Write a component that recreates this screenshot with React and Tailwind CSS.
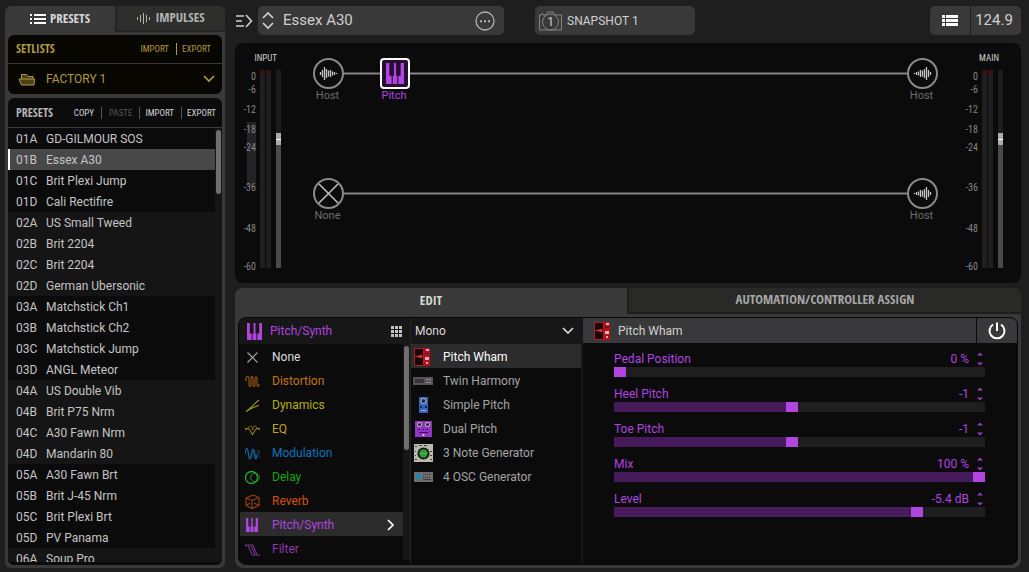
import React, { useState } from 'react';

const bankNames = [
  'GD-GILMOUR SOS', 'Essex A30', 'Brit Plexi Jump', 'Cali Rectifire',
  'US Small Tweed', 'Brit 2204', 'Brit 2204', 'German Ubersonic',
  'Matchstick Ch1', 'Matchstick Ch2', 'Matchstick Jump', 'ANGL Meteor',
  'US Double Vib', 'Brit P75 Nrm', 'A30 Fawn Nrm', 'Mandarin 80',
  'A30 Fawn Brt', 'Brit J-45 Nrm', 'Brit Plexi Brt', 'PV Panama',
  'Soup Pro',
];

// Four presets per bank: 01A, 01B, 01C, 01D, 02A...
const presets = bankNames.map((name, index) => ({
  slot: `0${Math.floor(index / 4) + 1}${'ABCD'[index % 4]}`,
  name,
  odd: Math.floor(index / 4) % 2 === 1,
}));

const initialParams = [
  { name: 'Pedal Position', min: 0, max: 100, step: 1, value: 0, unit: ' %' },
  { name: 'Heel Pitch', min: -24, max: 24, step: 1, value: -1, unit: '' },
  { name: 'Toe Pitch', min: -24, max: 24, step: 1, value: -1, unit: '' },
  { name: 'Mix', min: 0, max: 100, step: 1, value: 100, unit: ' %' },
  { name: 'Level', min: -60, max: 6, step: 0.1, value: -5.4, unit: ' dB' },
];

const scaleMarks = [
  { label: '0', gap: 'mt-0' },
  { label: '-6', gap: '-mt-px' },
  { label: '-12', gap: 'mt-1.5' },
  { label: '-18', gap: 'mt-1.5' },
  { label: '-24', gap: 'mt-1' },
  { label: '-36', gap: 'mt-[26px]' },
  { label: '-48', gap: 'mt-[27px]' },
  { label: '-60', gap: 'mt-6' },
];

const Chevron = ({ d = 'M1 1l5 5 5-5', className }) => (
  <svg className={className} width="12" height="8" viewBox="0 0 12 8" fill="none" stroke="currentColor" strokeWidth="1.7">
    <path d={d} />
  </svg>
);

const KeysIcon = ({ className }) => (
  <svg className={className} viewBox="0 0 16 18" preserveAspectRatio="none" fill="currentColor">
    <path d="M0 0h3v11h2v7H0zM6 11h1V0h2v11h1v7H6zM13 0h3v18h-5v-7h2z" />
  </svg>
);

const WaveIcon = ({ flip }) => (
  <svg className={flip ? '-scale-x-100' : ''} width="19" height="15" viewBox="0 0 19 15" stroke="#c4c4c4" strokeWidth="1.3">
    <path d="M1.5 6v3M3.5 4v7M5.5 1v13M7.5 3v9M9.5 4.5v6M11.5 4v7M13.5 5.5v4M15.5 6v3M17.5 7v1" />
  </svg>
);

const ListIcon = () => (
  <svg width="16" height="11" viewBox="0 0 16 11" fill="#fff">
    <path d="M0 0h2v2H0zM4 0h12v2H4zM0 4h2v2H0zM4 4h12v2H4zM0 8h2v2H0zM4 8h12v2H4z" />
  </svg>
);

const categoryIcons = {
  None: <path d="M2.500 2.500l10 10M12.500 2.500l-10 10" />,
  Distortion: <path d="M1 7V4q0-1.500 1.500-1.500T4 4v7q0 1.500 1 1.500T6 11V4q0-1.500 1-1.500T8 4v7q0 1.500 1 1.500T10 11V4q0-1 1-1T12 4v7q0 1.500 1 1.500T14 10" />,
  Dynamics: <path d="M1 13.500C5 11 9 8.500 14 7.500M1 13.500C6 10 9 6 14 2" />,
  EQ: (
    <>
      <path d="M0 6.500h3.500l1.500 2 2.500 4 2.500-4 1.500-2H15" />
      <path d="M0 8c3 0 3-4 5.500-4S9 8 7.500 8 8 4 10 4s2 4 5 4" strokeWidth=".8" />
    </>
  ),
  Modulation: (
    <>
      <path d="M0 8C1.500 0 2.500 1 3.500 8s2 6 3 0 2-7 3 0 1.500 6 2.500 1" strokeWidth="1.400" />
      <path d="M7 12c1-3 1-7 2-8s1.500 8 2.500 8 1-8 2-8 .5 6 1 8" strokeWidth=".6" />
    </>
  ),
  Delay: (
    <>
      <circle cx="6.500" cy="7.500" r="6" strokeWidth="1.300" />
      <circle cx="10" cy="7.500" r="4.300" strokeWidth=".9" />
    </>
  ),
  Reverb: <path d="M1 4L8 1l6 2.500v8L7 14.500l-6-3zM1 4l6 2.500 7-3M7 6.500v8M1 11.500L5 9M14 11.500L9 9" />,
  Filter: <path d="M0 3h8l4 10h3M3 3l4 10h6M6 3l4 10M0 3l1.500 1.500" />,
};

const categories = [
  { name: 'None', color: 'text-[#dedede]', icon: 'text-[#a8a8a8]' },
  { name: 'Distortion', color: 'text-[#c27414]', icon: 'text-[#9a5c10]' },
  { name: 'Dynamics', color: 'text-[#b5ae12]', icon: 'text-[#99941c]' },
  { name: 'EQ', color: 'text-[#c2a41c]', icon: 'text-[#94801c]' },
  { name: 'Modulation', color: 'text-[#0f74b8]', icon: 'text-[#14608f]' },
  { name: 'Delay', color: 'text-[#10a810]', icon: 'text-[#2ba42b]' },
  { name: 'Reverb', color: 'text-[#d8500f]', icon: 'text-[#9a400f]' },
  { name: 'Pitch/Synth', color: 'text-[#b045e0]', icon: 'text-[#b348e6]' },
  { name: 'Filter', color: 'text-[#8f3aae]', icon: 'text-[#713287]' },
];

const modelIcons = {
  'Pitch Wham': (
    <>
      <path d="M1.500 1.500h9v17h-9zM1.500 9.500h9" fill="#180707" stroke="#b01a22" />
      <path d="M3 9.500l6-2v4z" fill="#d8303a" />
      <path d="M11 1h6v18h-6z" fill="#b5101a" />
      <path d="M13 2h3v2h-3zM12 10h4v3h-4z" fill="#d8b8b8" />
      <path d="M12 6h4v1h-4z" fill="#5c0a10" />
      <circle cx="14" cy="16" r="1" fill="#ddd" />
    </>
  ),
  'Twin Harmony': (
    <>
      <path d="M0 6h20v8H0z" fill="#57535a" />
      <path d="M2 8h9v4H2z" fill="#37343a" />
      <path d="M13 8h2v1h-2zM16 8h2v1h-2zM13 11h2v1h-2zM16 11h2v1h-2z" fill="#99969c" />
    </>
  ),
  'Simple Pitch': (
    <>
      <path d="M6 2h9v16H6z" fill="#3564b8" />
      <circle cx="10.500" cy="6" r="3" fill="#aab4c4" />
      <circle cx="10.500" cy="6" r="2" fill="#20293c" />
      <path d="M7 11h2v2H7zM12 11h2v2h-2z" fill="#15244c" />
      <path d="M8 15h5v1H8z" fill="#8eb1f0" />
    </>
  ),
  'Dual Pitch': (
    <>
      <path d="M2 2h17v16H2z" fill="#9434c4" />
      <circle cx="6.500" cy="5.500" r="2.500" fill="#bbb" />
      <circle cx="14.500" cy="5.500" r="2.500" fill="#bbb" />
      <circle cx="6.500" cy="5.500" r="1.500" fill="#222" />
      <circle cx="14.500" cy="5.500" r="1.500" fill="#222" />
      <path d="M5 10h2v1H5zM9 10h2v1H9zM13 10h2v1h-2zM6 13h9v1H6z" fill="#3a1150" />
      <circle cx="10.500" cy="16" r="1" fill="#ddd" />
    </>
  ),
  '3 Note Generator': (
    <>
      <path d="M1 1h19v18H1z" fill="#b9b9ad" />
      <path d="M2 3h2v1H2zM6 2h3v1H6zM11 2h3v1h-3zM2 8h1v1H2zM2 12h1v1H2zM2 16h2v1H2zM17 8h2v1h-2zM17 12h2v1h-2zM17 16h2v1h-2z" fill="#444" />
      <circle cx="10.500" cy="10.500" r="6" fill="#141814" />
      <circle cx="10.500" cy="10.500" r="4.200" fill="#2f9a38" />
      <path d="M7 10.500h7" stroke="#54bc5c" />
    </>
  ),
  '4 OSC Generator': (
    <>
      <path d="M1 5h19v10H1z" fill="#6d6d6f" />
      <path d="M3 7h5v5H3z" fill="#1a8ab4" />
      <path d="M10 7h1v1h-1zM12 7h1v1h-1zM14 7h1v1h-1zM16 7h1v1h-1zM10 10h1v1h-1zM12 10h1v1h-1zM14 10h1v1h-1zM16 10h1v1h-1zM10 12h8v1h-8z" fill="#3a3a3c" />
    </>
  ),
};

const ModelIcon = ({ name }) => (
  <svg className="shrink-0" width="21" height="20" viewBox="0 0 21 20">{modelIcons[name]}</svg>
);

const PresetBrowser = () => {
  const [selected, setSelected] = useState(1);

  return (
    <aside className="flex w-[220px] shrink-0 flex-col rounded-md bg-[#393939]">
      <div className="flex h-[26px] font-['Open_Sans_Condensed','Liberation_Sans_Narrow',Roboto,sans-serif] text-[13px] font-bold">
        <button className="flex w-[110px] items-center justify-center gap-1 text-[#d8d8d8]">
          <ListIcon />
          PRESETS
        </button>
        <button className="flex flex-1 items-center justify-center gap-1 rounded-tr-md border-b-2 border-l-2 border-[#242424] bg-[#2e2e2d] text-[#b4b4b4]">
          <svg width="14" height="11" viewBox="0 0 14 11" stroke="currentColor">
            <path d="M.5 4v3M3.500 2v7M6.500 0v11M9.500 2v7M12.500 4v3" />
          </svg>
          IMPULSES
        </button>
      </div>
      <div className="flex min-h-0 flex-1 flex-col gap-1 px-[3px] pt-[3px] pb-[3px]">
        <section className="rounded-md bg-[#070601] text-[#b09a3c]">
          <div className="flex h-[29px] items-center border-b border-[#393939] px-2">
            <h2 className="flex-1 font-['Open_Sans_Condensed','Liberation_Sans_Narrow',Roboto,sans-serif] text-xs font-bold">SETLISTS</h2>
            <div className="flex divide-x divide-[#b09a3c] font-['Roboto_Condensed','Liberation_Sans_Narrow',Roboto,sans-serif] text-[9px] leading-3">
              <button className="px-[7px]">IMPORT</button>
              <button className="pr-[3px] pl-[5px]">EXPORT</button>
            </div>
          </div>
          <label className="flex h-[30px] items-center gap-2.5 pr-[7px] pl-2.5">
            <svg width="18" height="13" viewBox="0 0 18 13" fill="#4a401a" stroke="currentColor">
              <path d="M3.500 6V1.500h5l1.500 2h5V6" />
              <path d="M1 6h15.500l-.5 6H3.500z" />
            </svg>
            <select aria-label="Setlist" className="flex-1 appearance-none bg-transparent text-xs outline-none">
              <option>FACTORY 1</option>
            </select>
            <Chevron />
          </label>
        </section>
        <section className="flex min-h-0 flex-1 flex-col rounded-md bg-[#0b0b0b] pb-[3px]">
          <div className="flex h-[30px] shrink-0 items-center border-b border-[#393939] pl-2">
            <h2 className="flex-1 font-['Open_Sans_Condensed','Liberation_Sans_Narrow',Roboto,sans-serif] text-xs font-bold text-[#b4b4b4]">PRESETS</h2>
            <div className="flex divide-x divide-[#555] font-['Roboto_Condensed','Liberation_Sans_Narrow',Roboto,sans-serif] text-[9px] leading-3 text-[#d4d4d4]">
              <button className="px-[7px]">COPY</button>
              <button className="px-[7px] text-[#555]">PASTE</button>
              <button className="pr-[7px] pl-[5px]">IMPORT</button>
              <button className="pr-1.5 pl-[5px]">EXPORT</button>
            </div>
          </div>
          <div className="flex min-h-0 flex-1">
            <div className="flex-1 overflow-hidden">
              {presets.map((preset, index) => (
                <button
                  key={preset.slot}
                  onClick={() => setSelected(index)}
                  className={`flex h-[21px] w-full items-center text-left text-xs text-[#c4c4c4] ${
                    index === selected ? 'border-l-2 border-white bg-[#484848] pl-1.5' : preset.odd ? 'bg-[#151515] pl-2' : 'bg-[#0b0b0b] pl-2'
                  }`}
                >
                  <span className="w-[30px]">{preset.slot}</span>
                  <span>{preset.name}</span>
                </button>
              ))}
            </div>
            <div className="w-[7px] bg-[#151515] px-px pt-0.5">
              <div className="h-16 rounded-full bg-[#6e6e6e]" />
            </div>
          </div>
        </section>
      </div>
    </aside>
  );
};

const TopBar = () => (
  <header className="flex h-[29px] items-center text-[#d0d0d0]">
    <button aria-label="Toggle browser" className="w-[23px]">
      <svg width="19" height="14" viewBox="0 0 19 14" fill="none" stroke="currentColor" strokeWidth="1.600">
        <path d="M1 2h8M1 7h6M1 12h8M11 1l5.500 6L11 13" />
      </svg>
    </button>
    <div className="flex h-full w-[246px] items-center rounded-[5px] bg-[#393939] pr-[9px] pl-1">
      <div className="flex w-[21px] flex-col gap-[3px]">
        <button aria-label="Previous preset"><Chevron d="M1 7l5-5 5 5" /></button>
        <button aria-label="Next preset"><Chevron /></button>
      </div>
      <span className="flex-1 text-[15px]">Essex A30</span>
      <button aria-label="Preset menu">
        <svg width="20" height="20" viewBox="0 0 20 20" fill="none" stroke="#b4b4b4" strokeWidth="1.300">
          <circle cx="10" cy="10" r="9" />
          <path d="M5 9.200h2v2H5zM9 9.200h2v2H9zM13 9.200h2v2h-2z" fill="#b4b4b4" stroke="none" />
        </svg>
      </button>
    </div>
    <button className="ml-[31px] flex h-full w-40 items-center gap-[5px] rounded-[5px] bg-[#393939] pl-1">
      <span className="relative">
        <svg width="23" height="20" viewBox="0 0 23 20" fill="none" stroke="#858585">
          <path d="M.5 4H2V3h2v1h3l2-3h5l2 3h6.500v15H.5z" />
          <circle cx="11.500" cy="11" r="8" />
        </svg>
        <span className="absolute inset-0 flex items-center justify-center pt-0.5 text-xs">1</span>
      </span>
      <span className="text-xs">SNAPSHOT 1</span>
    </button>
    <div className="ml-auto flex h-full gap-px">
      <button aria-label="Setlist view" className="flex w-10 items-center justify-center rounded-l-[5px] bg-[#393939]">
        <svg width="16" height="12" viewBox="0 0 16 12" fill="#fff">
          <path d="M0 0h3v3H0zM4 0h12v3H4zM0 4h3v3H0zM4 4h12v3H4zM0 8h3v3H0zM4 8h12v3H4z" />
        </svg>
      </button>
      <button className="w-[50px] rounded-r-[5px] bg-[#393939] pr-1 text-[15px]">124.9</button>
    </div>
  </header>
);

const Meter = ({ label, highlight }) => {
  const [gain, setGain] = useState(66);

  return (
    <div className="flex flex-col gap-1">
      <div className="pr-1 text-right font-['Roboto_Condensed','Liberation_Sans_Narrow',Roboto,sans-serif] text-[9px] leading-4 text-[#d0d0d0]">{label}</div>
      <div className="flex h-[198px]">
        <div className="relative mr-1 w-[21px] text-right font-['Roboto_Condensed','Liberation_Sans_Narrow',Roboto,sans-serif] text-[10px] leading-[14px] text-[#858585]">
          {highlight && <div className="absolute top-[52px] right-0 h-[65px] w-[9px] bg-[#242426]" />}
          {scaleMarks.map((mark) => (
            <div key={mark.label} className={`relative ${mark.gap}`}>{mark.label}</div>
          ))}
        </div>
        <div className="mr-px w-[5px] border-t-5 border-[#351414] bg-[#1e1f1e]" />
        <div className="mr-[5px] w-[5px] border-t-5 border-[#351414] bg-[#1e1f1e]" />
        <input
          type="range"
          aria-label={`${label} level`}
          min="0"
          max="100"
          value={gain}
          onChange={(e) => setGain(Number(e.target.value))}
          style={{ background: `linear-gradient(to top, #4a4a4a ${gain}%, #1d1d1d ${gain}%)` }}
          className="h-full w-[5px] appearance-none [direction:rtl] [writing-mode:vertical-lr] [&::-webkit-slider-thumb]:h-3 [&::-webkit-slider-thumb]:w-[5px] [&::-webkit-slider-thumb]:appearance-none [&::-webkit-slider-thumb]:bg-[linear-gradient(#acacac_6px,#fff_6px,#fff_7px,#acacac_7px)]"
        />
      </div>
    </div>
  );
};

const Node = ({ label, children }) => (
  <div className="flex w-[31px] shrink-0 flex-col items-center">
    <button aria-label={label} className="flex size-[31px] items-center justify-center rounded-full border-2 border-[#8a8a8a]">
      {children}
    </button>
    <span className="pr-0.5 text-[11px] leading-[14px] text-[#6c6c6c]">{label}</span>
  </div>
);

const Wire = ({ className }) => <div className={`mt-3.5 h-[3px] border-y border-[#444] bg-[#8a8a8a] ${className}`} />;

const SignalChain = () => (
  <section className="flex rounded-lg bg-[#0b0b0b] pt-[7px] pr-[18px] pb-[15px]">
    <Meter label="INPUT" highlight />
    <div className="flex flex-1 flex-col gap-[75px] pt-2 pr-[19px] pl-8">
      <div className="flex items-start">
        <Node label="Host"><WaveIcon /></Node>
        <Wire className="w-9" />
        <div className="flex w-[30px] flex-col items-center">
          <button aria-label="Pitch" className="flex h-[31px] w-[30px] items-center justify-center rounded-[4px] border-2 border-white bg-[#241030]">
            <KeysIcon className="h-[21px] w-[18px] text-[#b045e0]" />
          </button>
          <span className="pr-0.5 text-[11px] leading-[14px] text-[#b045e0]">Pitch</span>
        </div>
        <Wire className="flex-1" />
        <Node label="Host"><WaveIcon flip /></Node>
      </div>
      <div className="flex items-start">
        <Node label="None">
          <svg className="shrink-0" width="21" height="21" viewBox="0 0 21 21" stroke="#c4c4c4" strokeWidth="1.500">
            <path d="M1 1l19 19M20 1L1 20" />
          </svg>
        </Node>
        <Wire className="flex-1" />
        <Node label="Host"><WaveIcon flip /></Node>
      </div>
    </div>
    <Meter label="MAIN" />
  </section>
);

const CategoryList = () => {
  const [category, setCategory] = useState('Pitch/Synth');

  return (
    <div className="flex w-[172px] shrink-0 flex-col border-r border-[#242424]">
      <div className="flex h-[26px] shrink-0 items-center bg-[#171717] pr-2 pl-2 text-xs text-[#b045e0]">
        <KeysIcon className="h-[17px] w-[15px]" />
        <span className="ml-2 flex-1">Pitch/Synth</span>
        <button aria-label="Grid view">
          <svg width="11" height="11" viewBox="0 0 11 11" fill="#c4c4c4">
            <path d="M0 0h3v3H0zM4 0h3v3H4zM8 0h3v3H8zM0 4h3v3H0zM4 4h3v3H4zM8 4h3v3H8zM0 8h3v3H0zM4 8h3v3H4zM8 8h3v3H8z" />
          </svg>
        </button>
      </div>
      <div className="flex min-h-0 flex-1">
        <div className="flex-1 overflow-hidden pl-px">
          {categories.map(({ name, color, icon }) => (
            <button
              key={name}
              onClick={() => setCategory(name)}
              className={`flex h-6 w-full items-center pt-0.5 pr-2 pl-[5px] text-left text-xs ${color} ${name === category ? 'bg-[#2c2c2c]' : ''}`}
            >
              {name === 'Pitch/Synth' ? (
                <KeysIcon className="mr-[14px] ml-px h-[14px] w-3" />
              ) : (
                <svg className={`mr-3 ${icon}`} width="15" height="15" viewBox="0 0 15 15" fill="none" stroke="currentColor" strokeWidth="1.100">
                  {categoryIcons[name]}
                </svg>
              )}
              <span className="flex-1">{name}</span>
              {name === category && (
                <svg width="8" height="12" viewBox="0 0 8 12" fill="none" stroke="#fff" strokeWidth="1.700">
                  <path d="M1 1l5 5-5 5" />
                </svg>
              )}
            </button>
          ))}
        </div>
        <div className="mb-1 w-[7px] bg-[#171717] px-px pt-0.5">
          <div className="h-[104px] rounded-full bg-[#6e6e6e]" />
        </div>
      </div>
    </div>
  );
};

const ModelList = ({ model, setModel }) => (
  <div className="flex w-[172px] shrink-0 flex-col border-r-2 border-[#171717]">
    <label className="flex h-[26px] items-center bg-[#171717] pr-[7px] pl-1 text-[#d8d8d8]">
      <select aria-label="Channel mode" className="flex-1 appearance-none bg-transparent text-xs outline-none">
        <option>Mono</option>
        <option>Stereo</option>
      </select>
      <Chevron />
    </label>
    {Object.keys(modelIcons).map((name) => (
      <button
        key={name}
        onClick={() => setModel(name)}
        className={`flex h-6 items-center gap-[9px] pt-0.5 pl-0.5 text-left text-xs ${name === model ? 'bg-[#2c2c2c] text-white' : 'text-[#a4a4a4]'}`}
      >
        <ModelIcon name={name} />
        {name}
      </button>
    ))}
  </div>
);

const ParamRow = ({ param, onChange }) => {
  const { name, min, max, step, value, unit } = param;
  const id = name.toLowerCase().replace(' ', '-');
  const fill = ((value - min) / (max - min)) * 100;

  return (
    <div className="flex flex-col text-xs text-[#b045e0]">
      <div className="flex h-[17px] items-center">
        <label htmlFor={id} className="flex-1">{name}</label>
        <span>{value}{unit}</span>
        <div className="flex w-4 flex-col items-end gap-1.5 pr-0.5">
          <button aria-label={`${name} up`} onClick={() => onChange(Math.min(max, value + step))}>
            <svg className="block" width="6" height="4" viewBox="0 0 6 4" fill="#9a3cc4"><path d="M0 3.500L3 .5l3 3z" /></svg>
          </button>
          <button aria-label={`${name} down`} onClick={() => onChange(Math.max(min, value - step))}>
            <svg className="block" width="6" height="4" viewBox="0 0 6 4" fill="#9a3cc4"><path d="M0 .5l3 3 3-3z" /></svg>
          </button>
        </div>
      </div>
      <input
        id={id}
        type="range"
        min={min}
        max={max}
        step={step}
        value={value}
        onChange={(e) => onChange(Number(e.target.value))}
        style={{ background: `linear-gradient(to right, #471a5c ${fill}%, #1e1e1e ${fill}%)` }}
        className="h-2.5 w-full appearance-none [&::-webkit-slider-thumb]:h-2.5 [&::-webkit-slider-thumb]:w-3 [&::-webkit-slider-thumb]:appearance-none [&::-webkit-slider-thumb]:bg-[#b045e0]"
      />
    </div>
  );
};

const Editor = () => {
  const [model, setModel] = useState('Pitch Wham');
  const [params, setParams] = useState(initialParams);

  const handleChange = (index, value) => {
    setParams(params.map((param, idx) => (idx === index ? { ...param, value } : param)));
  };

  return (
    <section className="flex min-h-0 flex-1 flex-col rounded-lg bg-[#393939]">
      <div className="flex h-[26px] shrink-0 font-['Open_Sans_Condensed','Liberation_Sans_Narrow',Roboto,sans-serif] text-[13px] font-bold">
        <button className="flex-1 text-[#d8d8d8]">EDIT</button>
        <button className="flex-1 rounded-tr-lg border-b-2 border-l-2 border-[#1e1e1c] bg-[#292927] text-[#a8a8a8]">AUTOMATION/CONTROLLER ASSIGN</button>
      </div>
      <div className="mx-[3px] mt-[3px] mb-[3px] flex min-h-0 flex-1 overflow-hidden rounded-lg border border-[#070707] bg-[#0b0b0b]">
        <CategoryList />
        <ModelList model={model} setModel={setModel} />
        <div className="flex min-w-0 flex-1 flex-col">
          <div className="flex h-[25px] gap-px text-[#d0d0d0]">
            <div className="flex flex-1 items-center gap-1 bg-[#39393b] pl-2.5 text-xs">
              <ModelIcon name={model} />
              {model}
            </div>
            <button aria-label="Bypass" className="flex w-10 items-center justify-center bg-[#39393b]">
              <svg width="18" height="18" viewBox="0 0 18 18" fill="none" stroke="#fff" strokeWidth="2">
                <path d="M9 .5V9M5 2.500a7.500 7.500 0 1 0 8 0" />
              </svg>
            </button>
          </div>
          <div className="flex flex-col gap-2 pt-[7px] pr-8 pl-[31px]">
            {params.map((param, index) => (
              <ParamRow key={param.name} param={param} onChange={(value) => handleChange(index, value)} />
            ))}
          </div>
        </div>
      </div>
    </section>
  );
};

const App = () => (
  <div className="flex h-screen gap-2.5 bg-[#1e1e1e] pt-1.5 pr-2 pb-1 pl-[5px] font-[Roboto,sans-serif]">
    <PresetBrowser />
    <main className="flex min-w-0 flex-1 flex-col">
      <TopBar />
      <div className="mt-2 flex min-h-0 flex-1 flex-col gap-[5px]">
        <SignalChain />
        <Editor />
      </div>
    </main>
  </div>
);

export default App;
